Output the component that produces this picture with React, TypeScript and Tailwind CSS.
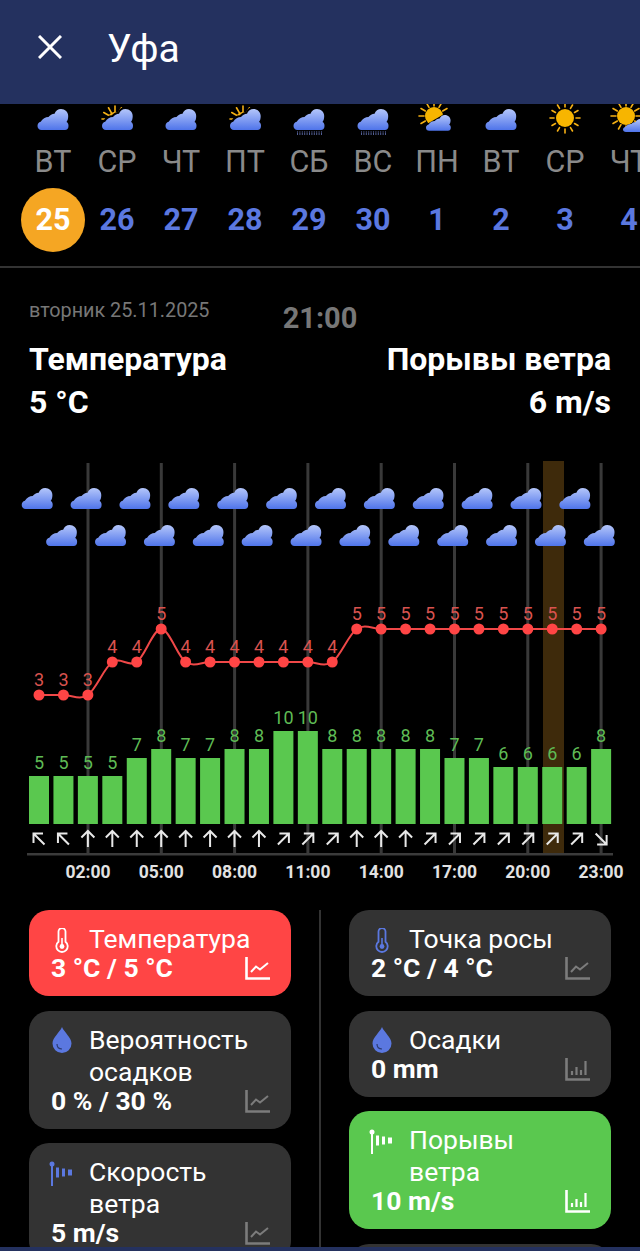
import React from "react";

type DayIcon = "cloud" | "partly" | "rain" | "mostlySun" | "sun" | "sunCloud";

const days: { icon: DayIcon; name: string; date: string }[] = [
  { icon: "cloud", name: "ВТ", date: "25" },
  { icon: "partly", name: "СР", date: "26" },
  { icon: "cloud", name: "ЧТ", date: "27" },
  { icon: "partly", name: "ПТ", date: "28" },
  { icon: "rain", name: "СБ", date: "29" },
  { icon: "rain", name: "ВС", date: "30" },
  { icon: "mostlySun", name: "ПН", date: "1" },
  { icon: "cloud", name: "ВТ", date: "2" },
  { icon: "sun", name: "СР", date: "3" },
  { icon: "sunCloud", name: "ЧТ", date: "4" },
];

const temps = [3, 3, 3, 4, 4, 5, 4, 4, 4, 4, 4, 4, 4, 5, 5, 5, 5, 5, 5, 5, 5, 5, 5, 5];
const gusts = [5, 5, 5, 5, 7, 8, 7, 7, 8, 8, 10, 10, 8, 8, 8, 8, 8, 7, 7, 6, 6, 6, 6, 8];
const winds = ["nw", "nw", "n", "n", "n", "n", "n", "n", "n", "n", "ne", "ne", "ne", "n", "n", "n", "ne", "ne", "ne", "ne", "ne", "ne", "ne", "se"];
const hours = ["02:00", "05:00", "08:00", "11:00", "14:00", "17:00", "20:00", "23:00"];

const CLOUD = "M4 21C1.5 21 0 19.3 0 17C0 15 1.2 13.3 3.2 12.8C5 9.5 8 8 11 8C12.5 6 14.5 5 17 4.8C18 2 20.5 0 23.5 0C27.5 0 30.7 3.2 30.7 7C30.7 9.5 30.2 11.5 29 13C30.4 13.5 31 15 31 17C31 19.5 29.6 21 27.5 21Z";

const xAt = (i: number) => 39 + i * 24.44;
const tempY = (t: number) => 695 - (t - 3) * 33 - 455;

function tempPath() {
  const pts = temps.map((t, i) => [xAt(i), tempY(t)]);
  let d = `M${pts[0][0]} ${pts[0][1]}`;
  for (let i = 0; i < pts.length - 1; i++) {
    const p0 = pts[Math.max(i - 1, 0)];
    const p1 = pts[i];
    const p2 = pts[i + 1];
    const p3 = pts[Math.min(i + 2, pts.length - 1)];
    d += `C${p1[0] + (p2[0] - p0[0]) / 6} ${p1[1] + (p2[1] - p0[1]) / 6} ${p2[0] - (p3[0] - p1[0]) / 6} ${p2[1] - (p3[1] - p1[1]) / 6} ${p2[0]} ${p2[1]}`;
  }
  return d;
}

const Rays = ({ cx, cy, r1, r2, from, to, w = 1.6 }: { cx: number; cy: number; r1: number; r2: number; from: number; to: number; w?: number }) => {
  const list = [];
  for (let a = from; a <= to; a += 30) {
    const rad = (a * Math.PI) / 180;
    list.push(
      <line key={a} x1={cx + r1 * Math.cos(rad)} y1={cy + r1 * Math.sin(rad)} x2={cx + r2 * Math.cos(rad)} y2={cy + r2 * Math.sin(rad)} stroke="#f5b014" strokeWidth={w} strokeLinecap="round" />
    );
  }
  return <>{list}</>;
};

function WeatherIcon({ kind }: { kind: DayIcon }) {
  return (
    <svg width="40" height="32" viewBox="0 0 40 32" className="overflow-visible">
      {kind === "cloud" && <path d={CLOUD} fill="url(#cloudFill)" transform="translate(4.5 7)" />}
      {kind === "partly" && (
        <>
          <Rays cx={18} cy={17} r1={6} r2={13} from={180} to={300} />
          <path d="M11 17a7 7 0 0 1 12-5v5z" fill="#f5b014" />
          <path d={CLOUD} fill="#000" transform="translate(3.5 5) scale(1.03)" />
          <path d={CLOUD} fill="url(#cloudFill)" transform="translate(5 7)" />
        </>
      )}
      {kind === "rain" && (
        <>
          <path d={CLOUD} fill="url(#cloudFill)" transform="translate(4.5 7)" />
          <line x1="8" y1="32" x2="34" y2="32" stroke="#6f7fc8" strokeWidth="1.5" strokeDasharray="1 1.4" />
          <line x1="8" y1="30" x2="34" y2="30" stroke="#6f7fc8" strokeWidth="1" strokeDasharray="1 1.4" />
        </>
      )}
      {kind === "mostlySun" && (
        <>
          <Rays cx={17} cy={14} r1={10} r2={15} from={150} to={360} />
          <circle cx="17" cy="14" r="9" fill="#f7b500" />
          <path d="M3 26L34 8V32H3z" fill="#000" />
          <path d={CLOUD} fill="url(#cloudFill)" transform="translate(9 13) scale(0.8 0.75)" />
        </>
      )}
      {kind === "sun" && (
        <>
          <Rays cx={20} cy={16} r1={11} r2={15} from={0} to={330} />
          <circle cx="20" cy="16" r="9" fill="#f7b500" />
        </>
      )}
      {kind === "sunCloud" && (
        <>
          <Rays cx={17} cy={14} r1={10} r2={15} from={90} to={420} />
          <circle cx="17" cy="14" r="9" fill="#f7b500" />
          <path d="M8 32L40 12V32z" fill="#000" />
          <path d={CLOUD} fill="url(#cloudFill)" transform="translate(14 17) scale(0.75 0.62)" />
        </>
      )}
    </svg>
  );
}

const arrowPaths: Record<string, string> = {
  n: "M0 8V-8M-6.5 -1.5L0 -8L6.5 -1.5",
  ne: "M-5.5 5.5L5.5 -5.5M-4 -5.5H5.5V4",
  nw: "M5.5 5.5L-5.5 -5.5M4 -5.5H-5.5V4",
  se: "M-5.5 -5.5L5.5 5.5M5.5 -4V5.5H-4",
};

function Chart() {
  return (
    <svg width="640" height="430" viewBox="0 0 640 430" className="block font-['Roboto',sans-serif]">
      <rect x="543" y="6" width="21" height="394" fill="#3e2a0b" />
      {hours.map((h, i) => (
        <line key={h} x1={88 + i * 73.3} x2={88 + i * 73.3} y1="8" y2="399" stroke="#393939" strokeWidth="3" />
      ))}
      {temps.map((_, i) => (
        <path key={i} d={CLOUD} fill="url(#cloudFill)" transform={`translate(${xAt(i) - 17.3} ${i % 2 === 0 ? 33 : 70})`} />
      ))}
      <path d={tempPath()} fill="none" stroke="#f04848" strokeWidth="2" />
      {temps.map((t, i) => (
        <g key={i}>
          <circle cx={xAt(i)} cy={tempY(t)} r="5.5" fill="#ff4545" />
          <text x={xAt(i)} y={tempY(t) - 9} textAnchor="middle" fontSize="18" fill="#d9534f">{t}</text>
        </g>
      ))}
      {gusts.map((g, i) => {
        const h = 9 * g + 3;
        return (
          <g key={i}>
            <rect x={xAt(i) - 10} y={369 - h} width="20" height={h} fill="#5ac84f" />
            <text x={xAt(i)} y={369 - h - 7} textAnchor="middle" fontSize="18" fill="#5fbb55">{g}</text>
            <path d={arrowPaths[winds[i]]} transform={`translate(${xAt(i)} 384)`} fill="none" stroke="#e8e8e8" strokeWidth="2" />
          </g>
        );
      })}
      <rect x="27" y="398" width="586" height="2.5" fill="#3b3b3b" />
      {hours.map((h, i) => (
        <text key={h} x={88 + i * 73.3} y="423" textAnchor="middle" fontSize="17.5" fontWeight="700" fill="#e2e2e2">{h}</text>
      ))}
    </svg>
  );
}

const Thermometer = ({ color }: { color: string }) => (
  <svg width="14" height="25" viewBox="0 0 14 25" fill="none" className="shrink-0">
    <path d="M3.5 3.5a3.5 3.5 0 0 1 7 0v10.3a5.7 5.7 0 1 1-7 0z" stroke={color} strokeWidth="1.8" />
    <circle cx="7" cy="18.5" r="2.4" fill={color} />
    <line x1="7" y1="10" x2="7" y2="17" stroke={color} strokeWidth="1.6" />
  </svg>
);

const Drop = ({ color }: { color: string }) => (
  <svg width="20" height="26" viewBox="0 0 20 26" className="shrink-0 -mt-[2px]">
    <path d="M10 0C12 5 19.5 10.5 19.5 16.5A9.5 9.5 0 0 1 .5 16.5C.5 10.5 8 5 10 0z" fill={color} />
    <path d="M5 17c0 3 2 5 5 5" stroke="#2a3a70" strokeWidth="1.2" fill="none" />
  </svg>
);

const Windsock = ({ color }: { color: string }) => (
  <svg width="26" height="25" viewBox="0 0 26 25" fill={color} className="shrink-0">
    <circle cx="3" cy="3" r="2.5" />
    <rect x="2" y="3" width="2" height="22" />
    <rect x="7" y="6.5" width="3" height="10" />
    <rect x="13" y="7.5" width="3" height="8" />
    <rect x="19" y="8.5" width="4" height="6" />
  </svg>
);

const LineIcon = ({ color }: { color: string }) => (
  <svg width="25" height="23" viewBox="0 0 25 23" fill="none" stroke={color} strokeWidth="2.6">
    <path d="M1.5 0V21.5H25" />
    <path d="M6 15L11 9.5L15 12.5L23 6" strokeWidth="2" />
  </svg>
);

const BarIcon = ({ color }: { color: string }) => (
  <svg width="25" height="23" viewBox="0 0 25 23" fill="none" stroke={color} strokeWidth="2.6">
    <path d="M1.5 0V21.5H25" />
    <path d="M7 17V13M11.5 17V9M16 17V12M20.5 17V3" strokeWidth="2.2" />
  </svg>
);

type CardProps = {
  lines: string[];
  value: string;
  tone?: "red" | "green";
  icon: "thermo" | "drop" | "wind";
  chart: "line" | "bar";
};

function Card({ lines, value, tone, icon, chart }: CardProps) {
  const bg = tone === "red" ? "bg-[#ff4545]" : tone === "green" ? "bg-[#5ac84f]" : "bg-[#333333]";
  const iconColor = tone ? "#ffffff" : "#5b78e0";
  const chartColor = tone ? "#ffffff" : "#7c7c7c";
  return (
    <div className={`${bg} rounded-[20px] pl-[22px] pr-[21px] pt-[13px] pb-[16px] text-white`}>
      <div className="flex">
        <div className="w-[38px] shrink-0 flex justify-center pt-[5px] pr-[16px]">
          {icon === "thermo" && <Thermometer color={iconColor} />}
          {icon === "drop" && <Drop color={iconColor} />}
          {icon === "wind" && <Windsock color={iconColor} />}
        </div>
        <div className="text-[26.5px] leading-[32px]">
          {lines.map((l) => (
            <div key={l}>{l}</div>
          ))}
        </div>
      </div>
      <div className="flex items-end justify-between h-[25px]">
        <span className="text-[26.5px] leading-[25px] font-bold">{value}</span>
        {chart === "line" ? <LineIcon color={chartColor} /> : <BarIcon color={chartColor} />}
      </div>
    </div>
  );
}

export default function App() {
  return (
    <div className="w-[640px] h-[1251px] bg-black flex flex-col overflow-hidden font-['Roboto',sans-serif]">
      <svg width="0" height="0" className="absolute">
        <defs>
          <linearGradient id="cloudFill" x1="0" y1="0" x2="0" y2="1">
            <stop offset="0" stopColor="#b4c6fa" />
            <stop offset="1" stopColor="#4f74ea" />
          </linearGradient>
        </defs>
      </svg>

      <header className="h-[104px] shrink-0 bg-[#24315f] flex items-center pl-[38px]">
        <svg width="24" height="24" viewBox="0 0 24 24" className="mr-[45px] -mt-[10px]" stroke="#fff" strokeWidth="3">
          <path d="M1 1L23 23M23 1L1 23" />
        </svg>
        <h1 className="text-[39px] text-white -mt-[6px]">Уфа</h1>
      </header>

      <main className="flex-1 min-h-0 overflow-hidden">
        <div className="flex pl-[21px] h-[164px] border-b-2 border-[#333333]">
          {days.map((d, i) => (
            <div key={i} className="w-[64px] shrink-0 flex flex-col items-center">
              <div className="h-[33px] -mt-[2px]">
                <WeatherIcon kind={d.icon} />
              </div>
              <div className="text-[30.5px] leading-[36px] mt-[9px] text-[#8a8a8a]">{d.name}</div>
              <div
                className={`w-[64px] h-[64px] mt-[8px] rounded-full flex items-center justify-center text-[30.5px] font-bold ${
                  i === 0 ? "bg-[#f5a623] text-white" : "text-[#5b78e0]"
                }`}
              >
                {d.date}
              </div>
            </div>
          ))}
        </div>

        <div className="px-[29px] pt-[31px]">
          <div className="grid grid-cols-[1fr_auto_1fr] h-[42px]">
            <span className="text-[19.8px] leading-[24px] text-[#777777]">вторник 25.11.2025</span>
            <span className="text-[29px] leading-[38px] font-bold text-[#777777]">21:00</span>
          </div>
          <div className="flex justify-between text-[32px] leading-[36px] font-bold text-white">
            <span>Температура</span>
            <span>Порывы ветра</span>
          </div>
          <div className="flex justify-between text-[32px] leading-[36px] mt-[7px] font-bold text-white">
            <span>5 °C</span>
            <span>6 m/s</span>
          </div>
        </div>

        <div className="mt-[35px]">
          <Chart />
        </div>

        <div className="grid grid-cols-2 px-[29px] mt-[25px] relative">
          <div className="flex flex-col gap-[14.5px] w-[262px]">
            <Card lines={["Температура"]} value="3 °C / 5 °C" tone="red" icon="thermo" chart="line" />
            <Card lines={["Вероятность", "осадков"]} value="0 % / 30 %" icon="drop" chart="line" />
            <Card lines={["Скорость", "ветра"]} value="5 m/s" icon="wind" chart="line" />
          </div>
          <div className="flex flex-col gap-[14.5px] w-[262px] justify-self-end">
            <Card lines={["Точка росы"]} value="2 °C / 4 °C" icon="thermo" chart="line" />
            <Card lines={["Осадки"]} value="0 mm" icon="drop" chart="bar" />
            <Card lines={["Порывы", "ветра"]} value="10 m/s" tone="green" icon="wind" chart="bar" />
            <div className="h-[86px] rounded-[20px] bg-[#333333]" />
          </div>
          <div className="absolute left-[319px] top-0 bottom-0 w-[2px] bg-[#333333]" />
        </div>
      </main>

      <div className="h-[4px] shrink-0 bg-[#24315f]" />
    </div>
  );
}
